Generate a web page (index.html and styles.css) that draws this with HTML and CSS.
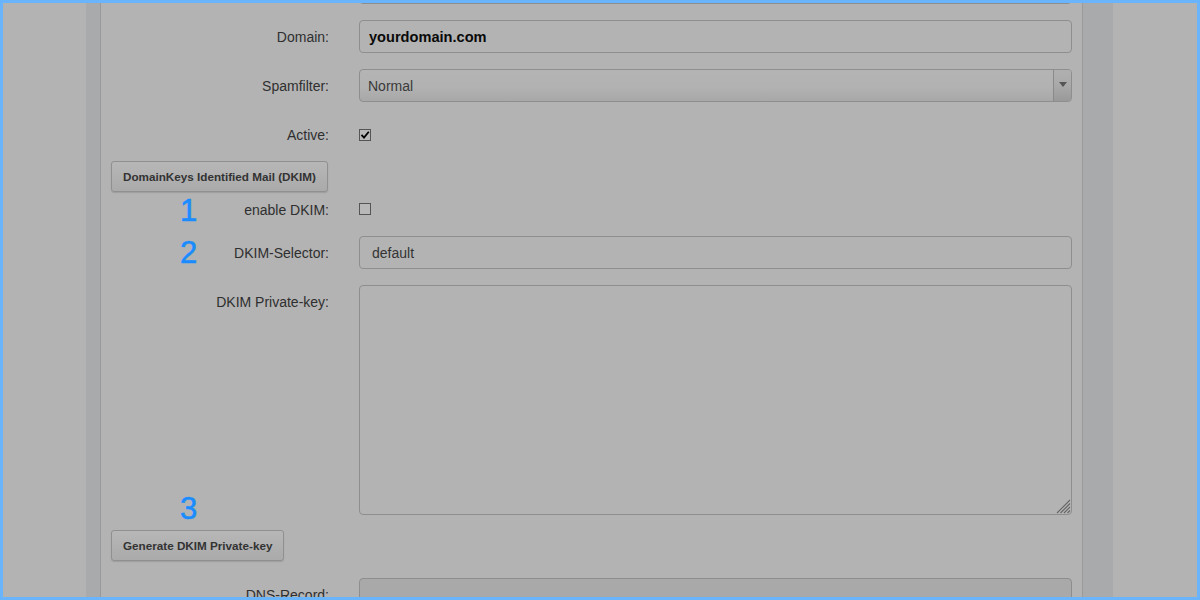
FILE: index.html
```html
<!DOCTYPE html>
<html>
<head>
<meta charset="utf-8">
<title>Domain DKIM</title>
<link rel="stylesheet" href="styles.css">
</head>
<body>
<div class="frame">
  <div class="page">
    <div class="panel">
      <form class="form">
        <div class="row">
          <span class="label"></span>
          <div class="select"><span class="select-text"></span><span class="select-arrow"></span></div>
        </div>
        <div class="row">
          <label class="label">Domain:</label>
          <div class="input input-bold">yourdomain.com</div>
        </div>
        <div class="row">
          <label class="label">Spamfilter:</label>
          <div class="select"><span class="select-text">Normal</span><span class="select-arrow"></span></div>
        </div>
        <div class="row row-check">
          <label class="label">Active:</label>
          <div class="field-check"><span class="checkbox checked"><svg viewBox="0 0 10 10" width="10" height="10"><path d="M1.5 4.8 L4 7.6 L8.8 1.8" fill="none" stroke="#000" stroke-width="1.8"/></svg></span></div>
        </div>
        <div class="btn-row first-btn">
          <button type="button" class="btn">DomainKeys Identified Mail (DKIM)</button>
        </div>
        <div class="row row-check enable">
          <label class="label">enable DKIM:</label>
          <div class="field-check"><span class="checkbox"></span></div>
          <span class="marker marker-1">1</span>
        </div>
        <div class="row">
          <label class="label">DKIM-Selector:</label>
          <div class="input input-sel">default</div>
          <span class="marker marker-2">2</span>
        </div>
        <div class="row row-top">
          <label class="label">DKIM Private-key:</label>
          <div class="textarea-wrap">
            <textarea class="textarea"></textarea>
            <svg class="grip" viewBox="0 0 15 15" width="15" height="15">
              <path d="M1 14 L14 1 M4.5 14 L14 4.5 M8 14 L14 8 M11.5 14 L14 11.5" stroke="#666" stroke-width="1.1" fill="none"/>
            </svg>
          </div>
        </div>
        <div class="btn-row second-btn">
          <button type="button" class="btn">Generate DKIM Private-key</button>
          <span class="marker marker-3">3</span>
        </div>
        <div class="row">
          <label class="label">DNS-Record:</label>
          <div class="input input-disabled"></div>
        </div>
      </form>
    </div>
  </div>
</div>
</body>
</html>
```

FILE: styles.css
```css
* { box-sizing: border-box; }

html, body {
  margin: 0;
  padding: 0;
  width: 1200px;
  height: 600px;
  overflow: hidden;
  font-family: "Liberation Sans", Arial, sans-serif;
}

.frame {
  width: 1200px;
  height: 600px;
  border: 3px solid #6ab4fc;
  background: #b3b3b3;
  overflow: hidden;
}

.page {
  display: flow-root;
  margin-left: 83px;
  width: 1027px;
  height: 100%;
  background: #a9aaab;
  padding: 0 30px 0 14px;
}

.panel {
  display: flow-root;
  height: 100%;
  background: #b3b3b3;
  border-left: 1px solid #999a9b;
  border-right: 1px solid #999a9b;
  padding: 0 9px 0 10px;
}

.form {
  margin-top: -32px;
  display: flex;
  flex-direction: column;
}

.row {
  position: relative;
  display: flex;
  align-items: center;
  margin-bottom: 16px;
}

.row-top { align-items: flex-start; margin-bottom: 15px; }

.label {
  flex: 0 0 218px;
  margin-right: 30px;
  text-align: right;
  font-size: 14px;
  padding-top: 1px;
  line-height: 32px;
  color: #2f2f2f;
}

.input, .select {
  flex: 0 0 713px;
  height: 33px;
  border: 1px solid #8e8e8e;
  border-radius: 4px;
  background: #b3b3b3;
  font-size: 14px;
  padding-top: 1px;
  line-height: 30px;
  color: #333;
}

.input { padding-left: 9px; }

.input-bold {
  font-weight: bold;
  font-size: 14.6px;
  color: #0a0a0a;
}

.input-sel { padding-left: 12px; color: #333; }

.input-disabled { background: #a9a9a9; }

.select {
  display: flex;
  padding-top: 0;
  background: linear-gradient(#b4b4b4 0%, #b2b2b2 55%, #a8a8a8 100%);
}

.select-text {
  flex: 1;
  padding-left: 8px;
  padding-top: 1px;
  color: #3a3a3a;
}

.select-arrow {
  position: relative;
  flex: 0 0 18px;
  border-left: 1px solid #8a8a8a;
  border-radius: 0 3px 3px 0;
  background: linear-gradient(#b0b0b0 0%, #a9a9a9 50%, #999 100%);
}

.select-arrow::after {
  content: "";
  position: absolute;
  left: 5px;
  top: 12px;
  border-left: 4px solid transparent;
  border-right: 4px solid transparent;
  border-top: 5px solid #555;
}

.row-check { height: 33px; margin-bottom: 10px; }
.row-check.enable { height: 34px; margin-bottom: 10px; }

.field-check {
  flex: 0 0 713px;
  display: flex;
  align-items: center;
}

.checkbox {
  display: inline-flex;
  align-items: center;
  justify-content: center;
  width: 12px;
  height: 12px;
  border: 1px solid #555;
  background: #b8b8b8;
}

.btn-row {
  position: relative;
  display: flex;
}

.first-btn { margin-bottom: 0; }
.second-btn { margin-bottom: 17px; }

.btn {
  height: 31px;
  padding: 0 11px;
  border: 1px solid #909090;
  border-radius: 3px;
  background: linear-gradient(#b7b7b7, #aaaaaa);
  box-shadow: 0 1px 1px rgba(0,0,0,0.12);
  font-family: "Liberation Sans", Arial, sans-serif;
  font-size: 11.7px;
  font-weight: bold;
  color: #333;
  cursor: pointer;
}

.textarea-wrap {
  position: relative;
  flex: 0 0 713px;
  height: 230px;
}

.textarea {
  display: block;
  width: 100%;
  height: 100%;
  margin: 0;
  border: 1px solid #8e8e8e;
  border-radius: 4px;
  background: #b3b3b3;
  resize: none;
  font-family: "Liberation Sans", Arial, sans-serif;
}

.grip {
  position: absolute;
  right: 1px;
  bottom: 1px;
}

.marker {
  position: absolute;
  left: 69px;
  font-family: "Liberation Sans", Arial, sans-serif;
  font-size: 31px;
  line-height: 1;
  color: #1a8cff;
  -webkit-text-stroke: 0.6px #1a8cff;
}

.marker-1 { top: 3px; }
.marker-2 { top: 1px; }
.marker-3 { top: -37px; }
```
